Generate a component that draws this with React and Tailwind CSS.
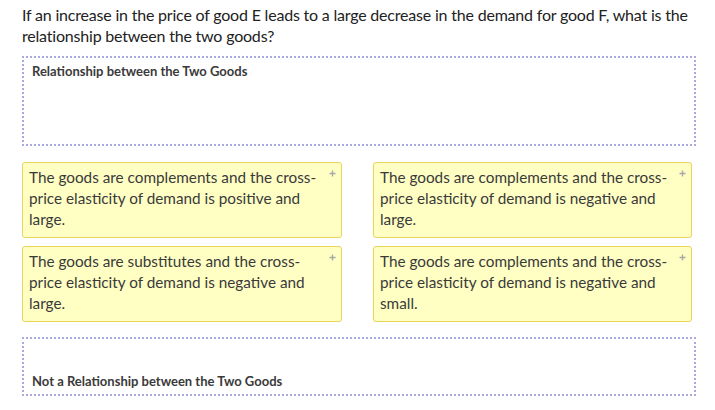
import React from "react";

function Plus() {
  return (
    <svg className="absolute right-[5px] top-[7px]" width="7" height="7" viewBox="0 0 7 7">
      <path d="M3.5 0.5V6.5M0.5 3.5H6.5" stroke="#a8a8a8" strokeWidth="1.4" />
    </svg>
  );
}

function Card({ children }) {
  return (
    <div className="relative h-[76px] rounded-[3px] border border-[#e8d35c] bg-[#ffffc4] pl-[6px] pr-[22px] pt-[4px] text-[15.3px] leading-[21px] text-[#3a3a3a]">
      {children}
      <Plus />
    </div>
  );
}

export default function App() {
  return (
    <div className="w-[715px] h-[410px] bg-white pl-[22px] pt-[4px]" style={{ fontFamily: "Lato, 'Noto Sans', sans-serif" }}>
      <p className="w-[690px] text-[16px] leading-[21px] tracking-[-0.2px] text-[#222]">
        If an increase in the price of good E leads to a large decrease in the demand for good F, what is the relationship between the two goods?
      </p>
      <div className="mt-[10px] h-[90px] w-[674px] border-2 border-dotted border-[#aaaade] px-[8px] pt-[5px]">
        <div className="text-[13px] font-bold leading-[16px] text-[#3a3a3a]">Relationship between the Two Goods</div>
      </div>
      <div className="mt-[16px] grid grid-cols-[320px_319px] gap-x-[31px] gap-y-[8px]">
        <Card>The goods are complements and the cross-price elasticity of demand is positive and large.</Card>
        <Card>The goods are complements and the cross-price elasticity of demand is negative and large.</Card>
        <Card>The goods are substitutes and the cross-price elasticity of demand is negative and large.</Card>
        <Card>The goods are complements and the cross-price elasticity of demand is negative and small.</Card>
      </div>
      <div className="mt-[15px] flex h-[59px] w-[674px] items-end border-2 border-dotted border-[#aaaade] px-[8px] pb-[5px]">
        <div className="text-[13px] font-bold leading-[16px] text-[#3a3a3a]">Not a Relationship between the Two Goods</div>
      </div>
    </div>
  );
}
